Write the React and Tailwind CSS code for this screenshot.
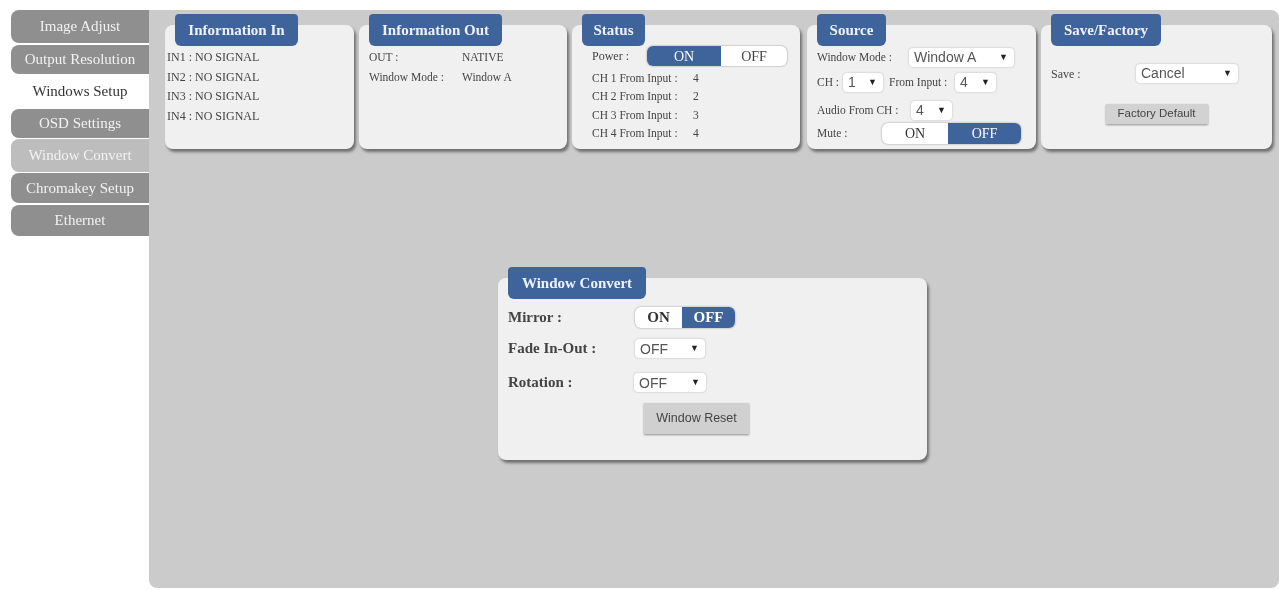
import React from "react";

const serif = "font-['Liberation_Serif',serif]";
const sans = "font-['Liberation_Sans',sans-serif]";

const tabs = [
  { label: "Image Adjust", box: "h-[33px] rounded-l-lg bg-[#8f8f8f] text-[#f2f2f2]" },
  { label: "Output Resolution", box: "h-[29px] mt-[2px] rounded-l-lg bg-[#8f8f8f] text-[#f2f2f2]" },
  { label: "Windows Setup", box: "h-[32px] mt-[1px] bg-white text-[#333333]" },
  { label: "OSD Settings", box: "h-[29px] mt-[2px] rounded-l-lg bg-[#8f8f8f] text-[#f2f2f2]" },
  { label: "Window Convert", box: "h-[33px] mt-[1px] rounded-l-lg bg-[#bdbdbd] text-[#f2f2f2]" },
  { label: "Chromakey Setup", box: "h-[30px] mt-[1px] rounded-l-lg bg-[#8f8f8f] text-[#f2f2f2]" },
  { label: "Ethernet", box: "h-[31px] mt-[2px] rounded-l-lg bg-[#8f8f8f] text-[#f2f2f2]" },
];

const Panel = ({ title, titleWidth, width, height = "h-[124px]", children }) => (
  <div className={`${width} ${height} flow-root shrink-0 rounded-lg bg-[#f0f0f0] shadow-[2px_3px_3px_#6f6f6f]`}>
    <div
      className={`${titleWidth} -mt-[11px] ml-[10px] flex h-[32px] items-center justify-center rounded-b-md rounded-t-sm bg-[#3f649c] text-[15px] font-bold text-[#eef3fa] ${serif}`}
    >
      {title}
    </div>
    {children}
  </div>
);

const Toggle = ({ on, width, onWidth, offWidth, height = "h-[21px]", text = "text-[14px]" }) => (
  <div className={`${width} ${height} ${text} flex overflow-hidden rounded-md bg-white shadow-[0_0_2px_#8a8a8a] ${serif}`}>
    <div className={`${onWidth} flex items-center justify-center ${on ? "bg-[#3f649c] text-white" : "text-[#333333]"}`}>ON</div>
    <div className={`${offWidth} flex items-center justify-center ${on ? "text-[#444444]" : "bg-[#3f649c] text-white"}`}>OFF</div>
  </div>
);

const Select = ({ value, width }) => (
  <div className={`${width} flex h-[19px] items-center justify-between rounded-sm bg-white pl-[5px] pr-[6px] text-[14px] font-normal text-[#555555] shadow-[0_0_2px_#b0b0b0] ${sans}`}>
    <span>{value}</span>
    <span className="text-[9px] text-[#222222]">▼</span>
  </div>
);

export default function App() {
  return (
    <div className={`h-[590px] w-[1279px] overflow-hidden bg-white pl-[11px] pt-[10px] blur-[0.6px] ${serif}`}>
      <div className="flex h-[578px] w-[1268px]">
        <div className="w-[138px] shrink-0">
          {tabs.map((tab) => (
            <div key={tab.label} className={`${tab.box} flex items-center justify-center text-[15px]`}>
              {tab.label}
            </div>
          ))}
        </div>

        <div className="flex-1 rounded-b-lg rounded-tr-lg bg-[#cbcbcb] pl-[16px] pt-[15px]">
          <div className="flex gap-[5px]">
            <Panel title="Information In" titleWidth="w-[123px]" width="w-[189px]">
              <div className="mt-[3px] space-y-[2.5px] pl-[2px] text-[12px] leading-[17px] text-[#444444]">
                <div>IN1 : NO SIGNAL</div>
                <div>IN2 : NO SIGNAL</div>
                <div>IN3 : NO SIGNAL</div>
                <div>IN4 : NO SIGNAL</div>
              </div>
            </Panel>

            <Panel title="Information Out" titleWidth="w-[133px]" width="w-[208px]">
              <div className="mt-[2px] space-y-[1px] pl-[10px] text-[11.5px] leading-[19px] text-[#444444]">
                <div className="flex"><span className="w-[93px]">OUT :</span><span>NATIVE</span></div>
                <div className="flex"><span className="w-[93px]">Window Mode :</span><span>Window A</span></div>
              </div>
            </Panel>

            <Panel title="Status" titleWidth="w-[63px]" width="w-[228px]">
              <div className="flex items-center pl-[20px] text-[12px] text-[#444444]">
                <span className="w-[55px]">Power :</span>
                <Toggle on width="w-[140px]" onWidth="w-[74px]" offWidth="w-[66px]" height="h-[20px]" />
              </div>
              <div className="mt-[3px] pl-[20px] text-[11.5px] leading-[18.3px] text-[#444444]">
                <div className="flex"><span className="w-[101px]">CH 1 From Input :</span><span>4</span></div>
                <div className="flex"><span className="w-[101px]">CH 2 From Input :</span><span>2</span></div>
                <div className="flex"><span className="w-[101px]">CH 3 From Input :</span><span>3</span></div>
                <div className="flex"><span className="w-[101px]">CH 4 From Input :</span><span>4</span></div>
              </div>
            </Panel>

            <div className="ml-[2px]">
              <Panel title="Source" titleWidth="w-[69px]" width="w-[229px]">
                <div className="pl-[10px] text-[11.5px] text-[#444444]">
                  <div className="mt-[2px] flex items-center">
                    <span className="w-[92px]">Window Mode :</span>
                    <Select value="Window A" width="w-[105px]" />
                  </div>
                  <div className="mt-[6px] flex items-center">
                    <span className="w-[26px]">CH :</span>
                    <Select value="1" width="w-[40px]" />
                    <span className="ml-[6px] w-[66px]">From Input :</span>
                    <Select value="4" width="w-[41px]" />
                  </div>
                  <div className="mt-[9px] flex items-center">
                    <span className="w-[94px]">Audio From CH :</span>
                    <Select value="4" width="w-[41px]" />
                  </div>
                  <div className="mt-[3px] flex items-center">
                    <span className="w-[65px]">Mute :</span>
                    <Toggle width="w-[139px]" onWidth="w-[66px]" offWidth="w-[73px]" />
                  </div>
                </div>
              </Panel>
            </div>

            <Panel title="Save/Factory" titleWidth="w-[110px]" width="w-[231px]">
              <div className="mt-[18px] flex items-center pl-[10px] text-[12px] text-[#444444]">
                <span className="w-[85px]">Save :</span>
                <Select value="Cancel" width="w-[102px]" />
              </div>
              <div className="mt-[21px] flex justify-center">
                <div className={`flex h-[20px] w-[102px] items-center justify-center bg-[#d2d2d2] text-[11.5px] text-[#444444] shadow-[0_1px_2px_#8f8f8f] ${sans}`}>
                  Factory Default
                </div>
              </div>
            </Panel>
          </div>

          <div className="ml-[333px] mt-[129px]">
            <Panel title="Window Convert" titleWidth="w-[138px]" width="w-[429px]" height="h-[182px]">
              <div className="pl-[10px] text-[15px] leading-none font-bold text-[#444444]">
                <div className="mt-[8px] flex items-center">
                  <span className="w-[127px]">Mirror :</span>
                  <Toggle width="w-[100px]" onWidth="w-[47px]" offWidth="w-[53px]" text="text-[15px]" />
                </div>
                <div className="mt-[11px] flex items-center">
                  <span className="w-[127px]">Fade In-Out :</span>
                  <Select value="OFF" width="w-[70px]" />
                </div>
                <div className="mt-[15px] flex items-center">
                  <span className="w-[126px]">Rotation :</span>
                  <Select value="OFF" width="w-[72px]" />
                </div>
                <div className="ml-[136px] mt-[11px] flex h-[31px] w-[105px] items-center justify-center bg-[#d0d0d0] shadow-[0_1px_2px_#8f8f8f]">
                  <span className={`text-[12.5px] font-normal text-[#444444] ${sans}`}>Window Reset</span>
                </div>
              </div>
            </Panel>
          </div>
        </div>
      </div>
    </div>
  );
}
